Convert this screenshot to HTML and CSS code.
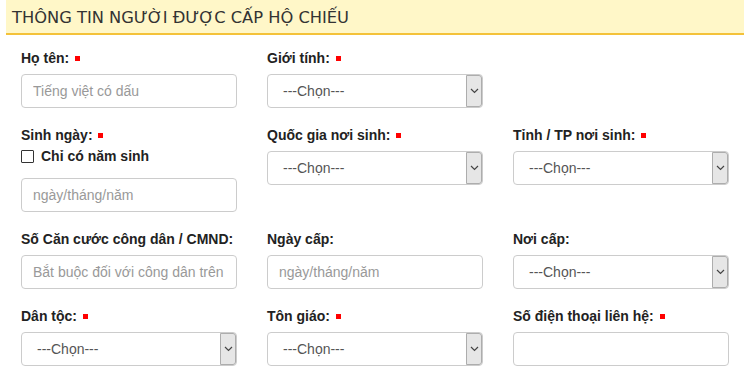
FILE: index.html
```html
<!DOCTYPE html>
<html lang="vi">
<head>
    <meta charset="UTF-8">
    <meta name="viewport" content="width=device-width, initial-scale=1.0">
    <title>Thông tin người được cấp hộ chiếu</title>
    <link rel="stylesheet" href="styles.css">
</head>
<body>
    <div class="page">
        <h2 class="section-title">THÔNG TIN NGƯỜI ĐƯỢC CẤP HỘ CHIẾU</h2>

        <div class="form-grid">
            <div class="field">
                <label class="field-label">Họ tên: <span class="req"></span></label>
                <input type="text" class="text-input" placeholder="Tiếng việt có dấu">
            </div>
            <div class="field">
                <label class="field-label">Giới tính: <span class="req"></span></label>
                <div class="select-box"><span class="select-value">---Chọn---</span><span class="select-arrow"><svg width="9" height="6" viewBox="0 0 9 6"><path d="M1 1l3.5 3.5L8 1" fill="none" stroke="#444" stroke-width="1.2"/></svg></span></div>
            </div>
            <div class="field"></div>

            <div class="field">
                <label class="field-label">Sinh ngày: <span class="req"></span></label>
                <div class="checkbox-row">
                    <span class="checkbox"></span>
                    <span class="checkbox-text">Chỉ có năm sinh</span>
                </div>
                <input type="text" class="text-input input-date" placeholder="ngày/tháng/năm">
            </div>
            <div class="field">
                <label class="field-label">Quốc gia nơi sinh: <span class="req"></span></label>
                <div class="select-box"><span class="select-value">---Chọn---</span><span class="select-arrow"><svg width="9" height="6" viewBox="0 0 9 6"><path d="M1 1l3.5 3.5L8 1" fill="none" stroke="#444" stroke-width="1.2"/></svg></span></div>
            </div>
            <div class="field">
                <label class="field-label">Tỉnh / TP nơi sinh: <span class="req"></span></label>
                <div class="select-box"><span class="select-value">---Chọn---</span><span class="select-arrow"><svg width="9" height="6" viewBox="0 0 9 6"><path d="M1 1l3.5 3.5L8 1" fill="none" stroke="#444" stroke-width="1.2"/></svg></span></div>
            </div>

            <div class="field">
                <label class="field-label">Số Căn cước công dân / CMND:</label>
                <input type="text" class="text-input" placeholder="Bắt buộc đối với công dân trên 14 tuổi">
            </div>
            <div class="field">
                <label class="field-label">Ngày cấp:</label>
                <input type="text" class="text-input" placeholder="ngày/tháng/năm">
            </div>
            <div class="field">
                <label class="field-label">Nơi cấp:</label>
                <div class="select-box"><span class="select-value">---Chọn---</span><span class="select-arrow"><svg width="9" height="6" viewBox="0 0 9 6"><path d="M1 1l3.5 3.5L8 1" fill="none" stroke="#444" stroke-width="1.2"/></svg></span></div>
            </div>

            <div class="field">
                <label class="field-label">Dân tộc: <span class="req"></span></label>
                <div class="select-box"><span class="select-value">---Chọn---</span><span class="select-arrow"><svg width="9" height="6" viewBox="0 0 9 6"><path d="M1 1l3.5 3.5L8 1" fill="none" stroke="#444" stroke-width="1.2"/></svg></span></div>
            </div>
            <div class="field">
                <label class="field-label">Tôn giáo: <span class="req"></span></label>
                <div class="select-box"><span class="select-value">---Chọn---</span><span class="select-arrow"><svg width="9" height="6" viewBox="0 0 9 6"><path d="M1 1l3.5 3.5L8 1" fill="none" stroke="#444" stroke-width="1.2"/></svg></span></div>
            </div>
            <div class="field">
                <label class="field-label">Số điện thoại liên hệ: <span class="req"></span></label>
                <input type="text" class="text-input">
            </div>
        </div>
    </div>
</body>
</html>
```

FILE: styles.css
```css
body {
    margin: 0;
    padding: 0;
    background-color: #fff;
    font-family: "Liberation Sans", Arial, sans-serif;
    color: #222;
}

.page {
    padding: 0 6px;
}

.section-title {
    margin: 0;
    height: 33px;
    line-height: 35px;
    padding-left: 6px;
    background-color: #fff7c8;
    border-bottom: 2px solid #f4c23a;
    font-family: "DejaVu Sans", Tahoma, sans-serif;
    font-size: 16.3px;
    font-weight: normal;
    color: #333;
}

.form-grid {
    display: grid;
    grid-template-columns: repeat(3, 216px);
    column-gap: 30px;
    row-gap: 18px;
    padding: 14px 15px 0;
}

.field {
    display: flex;
    flex-direction: column;
}

.field-label {
    display: block;
    height: 18px;
    line-height: 18px;
    font-size: 14px;
    font-weight: bold;
    color: #222;
    margin-bottom: 7px;
}

.req {
    display: inline-block;
    width: 5px;
    height: 5px;
    margin-left: 2px;
    background-color: #f00;
    vertical-align: 2px;
}

.text-input {
    box-sizing: border-box;
    width: 216px;
    height: 34px;
    padding: 0 11px;
    border: 1px solid #ccc;
    border-radius: 4px;
    font-family: "Liberation Sans", Arial, sans-serif;
    font-size: 14px;
    color: #555;
    background-color: #fff;
    outline: none;
}

.text-input::placeholder {
    color: #999;
}

.input-date {
    margin-top: 12px;
}

.checkbox-row {
    display: flex;
    align-items: center;
    height: 20px;
    margin-top: -5px;
}

.checkbox {
    box-sizing: border-box;
    width: 13px;
    height: 13px;
    border: 1px solid #333;
    border-radius: 1px;
    margin-right: 7px;
}

.checkbox-text {
    font-size: 14px;
    font-weight: bold;
    color: #222;
}

.select-box {
    box-sizing: border-box;
    display: flex;
    width: 216px;
    height: 34px;
    border: 1px solid #ccc;
    border-radius: 4px;
    background-color: #fff;
}

.select-value {
    flex: 1;
    padding-left: 15px;
    line-height: 32px;
    font-size: 14px;
    color: #555;
}

.select-arrow {
    box-sizing: border-box;
    display: flex;
    align-items: center;
    justify-content: center;
    width: 16px;
    background-color: #e6e6e6;
    border: 1px solid #adadad;
    border-radius: 0 3px 3px 0;
}
```
